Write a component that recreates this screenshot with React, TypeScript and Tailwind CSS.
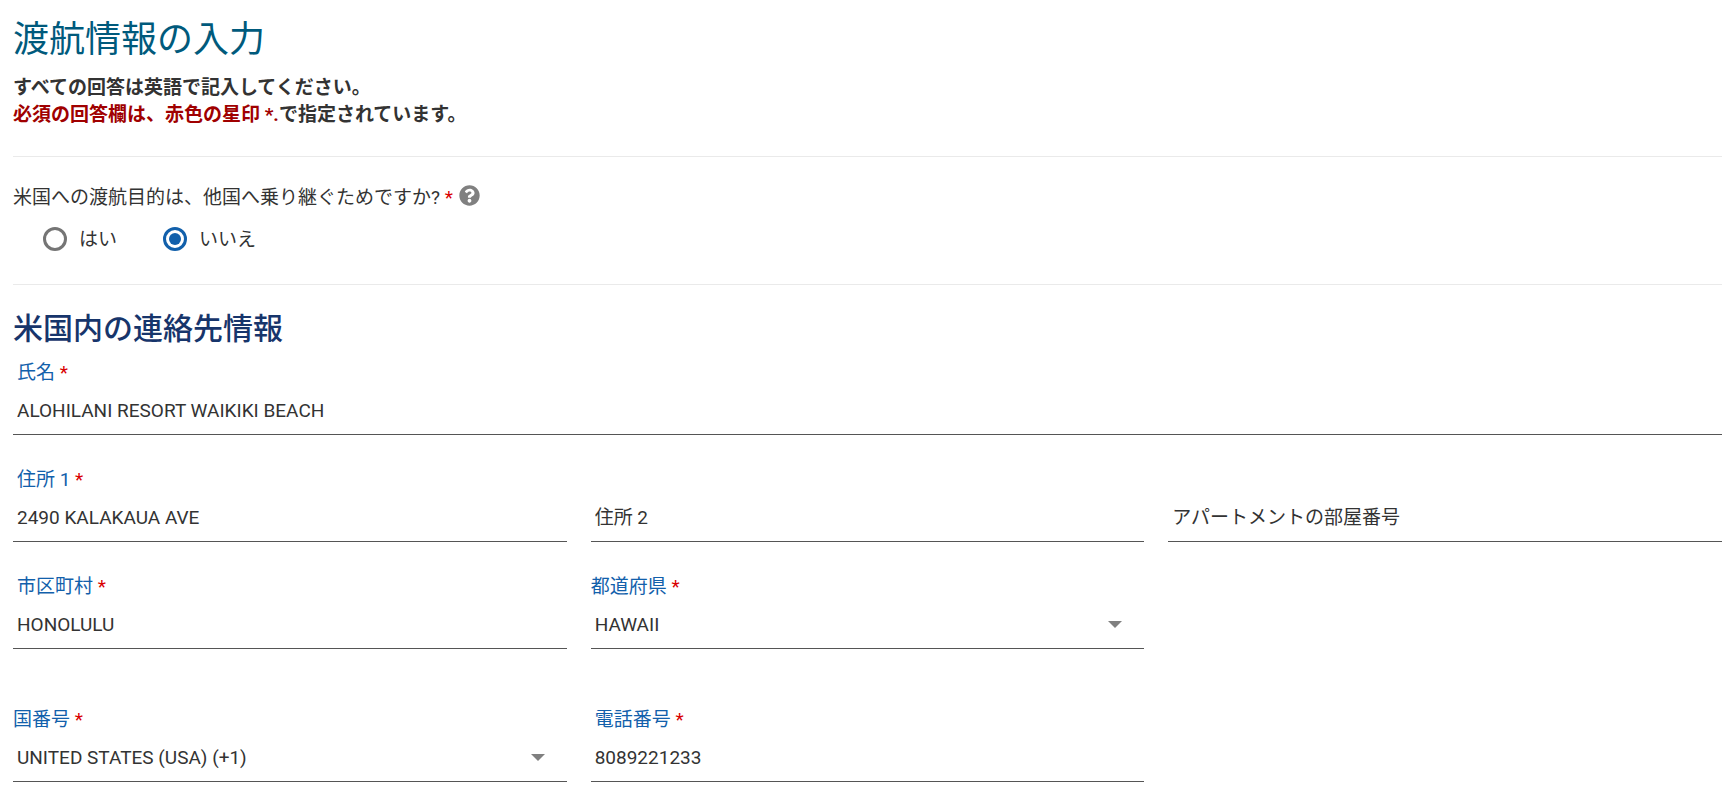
import { useState } from "react";
import type { ReactNode } from "react";
import { FaQuestionCircle } from "react-icons/fa";

type FieldProps = {
  id: string;
  label: string;
  defaultValue?: string;
};

function Required() {
  return <span className="text-[#d90000]"> *</span>;
}

function FieldLabel({ id, inset, children }: { id: string; inset?: boolean; children: ReactNode }) {
  return (
    <label htmlFor={id} className={`block h-7 leading-[30px] text-[#1260ab] ${inset ? "pl-1" : ""}`}>
      {children}
      <Required />
    </label>
  );
}

function TextField({ id, label, defaultValue }: FieldProps) {
  return (
    <div>
      <FieldLabel id={id} inset>{label}</FieldLabel>
      <input
        id={id}
        type="text"
        defaultValue={defaultValue}
        className="block h-[49px] w-full border-b border-[#555] bg-transparent px-1 text-[#333] focus:outline-none"
      />
    </div>
  );
}

// Optional fields show their label inside the box
function OptionalField({ id, label }: FieldProps) {
  return (
    <div className="flex flex-col justify-end">
      <input
        id={id}
        type="text"
        aria-label={label}
        placeholder={label}
        className="block h-[49px] w-full border-b border-[#555] bg-transparent px-1 text-[#333] placeholder:text-[#333] focus:outline-none"
      />
    </div>
  );
}

function SelectField({ id, label, defaultValue }: FieldProps) {
  return (
    <div>
      <FieldLabel id={id}>{label}</FieldLabel>
      <div className="relative">
        <select
          id={id}
          defaultValue={defaultValue}
          className="block h-[49px] w-full appearance-none border-b border-[#555] bg-transparent px-1 pt-0.5 text-[#333] focus:outline-none"
        >
          <option>{defaultValue}</option>
        </select>
        <svg viewBox="0 0 14 7" className="pointer-events-none absolute top-[21px] right-[22px] h-[7px] w-3.5 fill-[#808080]">
          <path d="M0 0h14L7 7z" />
        </svg>
      </div>
    </div>
  );
}

export default function App() {
  const [transit, setTransit] = useState("no");

  return (
    <main className="bg-white pt-[18px] pr-px pb-3 pl-[13px] font-[Roboto,'Noto_Sans_CJK_JP',sans-serif] text-[19px] text-[#333]" lang="ja">
      <h1 className="text-4xl leading-[44px] text-[#005a7c]">渡航情報の入力</h1>
      <p className="mt-3 leading-[27px] font-bold">
        すべての回答は英語で記入してください。
        <br />
        <span className="text-[#a00000]">必須の回答欄は、赤色の星印 *.</span>で指定されています。
      </p>

      <hr className="mt-7 border-[#eaeaea]" />

      <fieldset className="mt-[26px]">
        <legend className="flex h-7 items-start">
          <span className="leading-[30px]">
            米国への渡航目的は、他国へ乗り継ぐためですか?
            <Required />
          </span>
          <button type="button" aria-label="ヘルプ" className="mt-0.5 ml-1.5 text-[#808080]">
            <FaQuestionCircle className="size-[21px]" />
          </button>
        </legend>
        <div className="mt-3.5 ml-[30px] flex gap-[46px]">
          {[
            { value: "yes", text: "はい" },
            { value: "no", text: "いいえ" },
          ].map((o) => (
            <label key={o.value} className="flex h-7 items-center gap-3">
              <input
                type="radio"
                name="transit"
                value={o.value}
                checked={transit === o.value}
                onChange={() => setTransit(o.value)}
                className="size-6 appearance-none rounded-full border-3 border-[#757575] bg-clip-content p-[3px] checked:border-[#1260ab] checked:bg-[#1260ab]"
              />
              <span className="pt-0.5">{o.text}</span>
            </label>
          ))}
        </div>
      </fieldset>

      <hr className="mt-[31px] border-[#eaeaea]" />

      <section className="mt-6">
        <h2 className="text-3xl leading-10 font-medium text-[#17356b]">米国内の連絡先情報</h2>
        <div className="mt-[9px] grid grid-cols-3 gap-x-6 gap-y-[30px]">
          <div className="col-span-3">
            <TextField id="name" label="氏名" defaultValue="ALOHILANI RESORT WAIKIKI BEACH" />
          </div>
          <TextField id="address1" label="住所 1" defaultValue="2490 KALAKAUA AVE" />
          <OptionalField id="address2" label="住所 2" />
          <OptionalField id="apartment" label="アパートメントの部屋番号" />
          <TextField id="city" label="市区町村" defaultValue="HONOLULU" />
          <SelectField id="state" label="都道府県" defaultValue="HAWAII" />
        </div>
        <div className="mt-14 grid grid-cols-3 gap-x-6">
          <SelectField id="country-code" label="国番号" defaultValue="UNITED STATES (USA) (+1)" />
          <TextField id="phone" label="電話番号" defaultValue="8089221233" />
        </div>
      </section>
    </main>
  );
}
